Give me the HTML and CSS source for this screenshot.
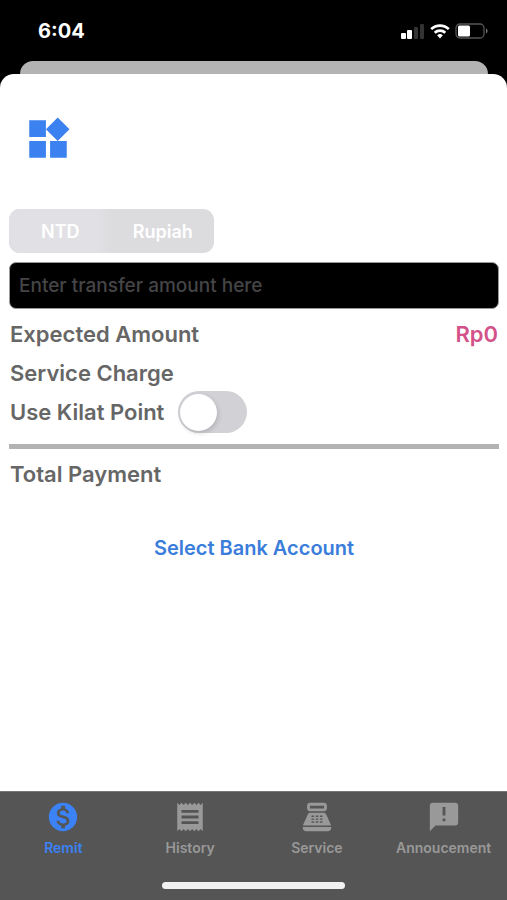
FILE: index.html
```html
<!DOCTYPE html>
<html lang="en">
<head>
<meta charset="utf-8">
<meta name="viewport" content="width=device-width, initial-scale=1">
<title>Remit</title>
<link rel="stylesheet" href="styles.css">
</head>
<body>
<header class="status">
  <span class="time">6:04</span>
  <div class="status-icons">
    <svg width="24" height="16" viewBox="0 0 24 16" aria-hidden="true">
      <g fill="#fff"><rect x="0" y="10" width="5" height="6" rx="1"/><rect x="6" y="7" width="5" height="9" rx="1"/></g>
      <g fill="#333"><rect x="13" y="4" width="4" height="12" rx="1"/><rect x="19" y="1" width="4" height="15" rx="1"/></g>
    </svg>
    <svg width="20" height="16" viewBox="0 0 20 16" aria-hidden="true">
      <g fill="none" stroke="#fff" stroke-width="2.7"><path d="M1.2 6.1a12.7 12.7 0 0 1 17.6 0"/><path d="M4.7 9.8a7.7 7.7 0 0 1 10.6 0"/></g>
      <path fill="#fff" d="M7.1 12.3a4.4 4.4 0 0 1 5.8 0L10 15.4z"/>
    </svg>
    <svg width="34" height="16" viewBox="0 0 34 16" aria-hidden="true">
      <rect x="1" y="1" width="28" height="14" rx="4" fill="none" stroke="#555" stroke-width="1.3"/>
      <rect x="3" y="2.500" width="12" height="11" rx="1.500" fill="#fff"/>
      <path d="M31 5.500c2 .8 2 4.200 0 5z" fill="#777"/>
    </svg>
  </div>
</header>
<div class="back-card"></div>
<main class="sheet">
  <button class="menu" type="button" aria-label="Menu">
    <svg width="50" height="50" viewBox="0 0 24 24" fill="currentColor" aria-hidden="true"><path d="M13 13v8h8v-8h-8zM3 21h8v-8H3v8zM3 3v8h8V3H3zm13.660-1.310L11 7.340 16.660 13l5.660-5.660-5.660-5.650z"/></svg>
  </button>
  <form class="form">
    <div class="segments" role="radiogroup" aria-label="Currency">
      <label class="segment"><input type="radio" name="currency" checked><span>NTD</span></label>
      <label class="segment"><input type="radio" name="currency"><span>Rupiah</span></label>
    </div>
    <input class="amount" type="text" inputmode="decimal" aria-label="Transfer amount" placeholder="Enter transfer amount here">
    <div class="row"><span>Expected Amount</span><span class="value">Rp0</span></div>
    <div class="row"><span>Service Charge</span></div>
    <div class="row row-point">
      <label for="point">Use Kilat Point</label>
      <input class="switch" id="point" type="checkbox" role="switch">
    </div>
    <hr class="rule">
    <div class="row"><span>Total Payment</span></div>
    <button class="bank" type="button">Select Bank Account</button>
  </form>
</main>
<nav class="tabbar">
  <div class="tabs">
    <a class="tab active" href="#remit" aria-current="page">
      <svg class="icon" viewBox="0 0 24 24" aria-hidden="true"><path d="M12 2C6.480 2 2 6.480 2 12s4.480 10 10 10 10-4.480 10-10S17.520 2 12 2zm1.410 16.090V20h-2.670v-1.930c-1.710-.36-3.160-1.460-3.270-3.400h1.960c.1 1.050.82 1.870 2.650 1.870 1.960 0 2.400-.98 2.400-1.590 0-.83-.44-1.610-2.670-2.140-2.480-.6-4.180-1.620-4.180-3.670 0-1.720 1.390-2.840 3.110-3.210V4h2.670v1.950c1.860.45 2.790 1.860 2.850 3.390H14.300c-.05-1.110-.64-1.870-2.220-1.870-1.500 0-2.400.68-2.400 1.640 0 .84.65 1.390 2.670 1.910s4.180 1.390 4.180 3.910c-.01 1.830-1.380 2.830-3.120 3.160z"/></svg>
      <span>Remit</span>
    </a>
    <a class="tab" href="#history">
      <svg class="icon" viewBox="0 0 24 24" aria-hidden="true"><path d="M18 17H6v-2h12v2zm0-4H6v-2h12v2zm0-4H6V7h12v2zM3 22l1.500-1.500L6 22l1.500-1.500L9 22l1.500-1.500L12 22l1.500-1.500L15 22l1.500-1.500L18 22l1.500-1.500L21 22V2l-1.500 1.500L18 2l-1.500 1.500L15 2l-1.500 1.500L12 2l-1.500 1.500L9 2 7.500 3.500 6 2 4.500 3.500 3 2v20z"/></svg>
      <span>History</span>
    </a>
    <a class="tab" href="#service">
      <svg class="icon" viewBox="0 0 24 24" aria-hidden="true">
        <path d="M17 2H7c-1.100 0-2 .9-2 2v2c0 1.100.9 2 2 2h10c1.100 0 2-.9 2-2V4c0-1.100-.9-2-2-2zm0 4H7V4h10v2zM20 22H4c-1.100 0-2-.9-2-2v-1h20v1c0 1.100-.9 2-2 2zM18.530 10.190C18.210 9.470 17.490 9 16.700 9H7.300c-.79 0-1.510.47-1.830 1.190L2 18h20z"/>
        <g class="keys"><rect x="8" y="11" width="2" height="1" rx=".5"/><rect x="11" y="11" width="2" height="1" rx=".5"/><rect x="14" y="11" width="2" height="1" rx=".5"/><rect x="8" y="13" width="2" height="1" rx=".5"/><rect x="11" y="13" width="2" height="1" rx=".5"/><rect x="14" y="13" width="2" height="1" rx=".5"/><rect x="8" y="15" width="2" height="1" rx=".5"/><rect x="11" y="15" width="2" height="1" rx=".5"/><rect x="14" y="15" width="2" height="1" rx=".5"/></g>
      </svg>
      <span>Service</span>
    </a>
    <a class="tab" href="#announcement">
      <svg class="icon" viewBox="0 0 24 24" aria-hidden="true"><path d="M20 2H4c-1.100 0-1.990.9-1.990 2L2 22l4-4h14c1.100 0 2-.9 2-2V4c0-1.100-.9-2-2-2zm-7 9h-2V5h2v6zm0 4h-2v-2h2v2z"/></svg>
      <span>Annoucement</span>
    </a>
  </div>
  <div class="home-indicator"></div>
</nav>
</body>
</html>
```
FILE: styles.css
```css
* {
  box-sizing: border-box;
}

body {
  margin: 0;
  min-height: 100vh;
  display: flex;
  flex-direction: column;
  background: #000;
  color: #666;
  font-family: Inter, "Liberation Sans", sans-serif;
}

button,
input {
  margin: 0;
  font-family: inherit;
}

.status {
  display: flex;
  justify-content: space-between;
  align-items: center;
  height: 61px;
  padding: 0 18px 0 38px;
  color: #fff;
}

.time {
  font-size: 20px;
  font-weight: 700;
}

.status-icons {
  display: flex;
  gap: 5px;
}

.back-card {
  height: 13px;
  margin: 0 19px 0 20px;
  border-radius: 13px 13px 0 0;
  background: #b3b3b4;
}

.sheet {
  flex: 1;
  padding: 40px 8px 24px 9px;
  border-radius: 14px 14px 0 0;
  background: #fff;
}

.menu {
  display: block;
  margin-left: 14px;
  padding: 0;
  border: 0;
  background: none;
  color: #3b82f0;
}

.menu svg {
  display: block;
}

.form {
  display: flex;
  flex-direction: column;
  margin-top: 45px;
}

.segments {
  display: grid;
  grid-template-columns: 1fr 1fr;
  width: 205px;
  height: 44px;
  border-radius: 11px;
  overflow: hidden;
  background: #dcdcdf;
}

.segment {
  display: grid;
  cursor: pointer;
}

.segment input {
  grid-area: 1 / 1;
  appearance: none;
}

.segment input:checked {
  background: linear-gradient(to right, #e1e1e5 85%, #dcdcdf);
}

.segment span {
  grid-area: 1 / 1;
  place-self: center;
  color: #fff;
  font-size: 18px;
  font-weight: 600;
}

.amount {
  width: 100%;
  height: 47px;
  margin: 9px 0 5px;
  padding: 0 9px;
  border: 1px solid #999;
  border-radius: 7px;
  background: #000;
  color: #fff;
  font-size: 19px;
  font-weight: 500;
}

.amount::placeholder {
  color: #454547;
  opacity: 1;
}

.row {
  display: flex;
  justify-content: space-between;
  align-items: center;
  height: 39px;
  padding: 0 1px;
  font-size: 22px;
  font-weight: 600;
}

.row-point {
  justify-content: flex-start;
  gap: 14px;
}

.value {
  color: #d4528a;
}

.switch {
  display: flex;
  flex: none;
  width: 69px;
  height: 42px;
  padding: 3px 2px;
  appearance: none;
  border-radius: 21px;
  background: #d1d1d6;
  cursor: pointer;
}

.switch::before {
  content: "";
  width: 37px;
  height: 37px;
  border-radius: 50%;
  background: #fff;
  box-shadow: 1px 2px 5px rgba(0, 0, 0, 0.16);
}

.switch:checked {
  justify-content: flex-end;
  background: #3b82f0;
}

.rule {
  width: 100%;
  height: 5px;
  margin: 13px 0 5px;
  border: 0;
  background: #b3b3b3;
}

.bank {
  align-self: center;
  margin-top: 41px;
  padding: 0;
  border: 0;
  background: none;
  color: #3b7ddb;
  font-size: 20px;
  font-weight: 600;
  line-height: 28px;
}

.tabbar {
  height: 109px;
  padding-top: 8px;
  border-top: 1px solid #777;
  background: #555;
}

.tabs {
  display: grid;
  grid-template-columns: repeat(4, 1fr);
}

.tab {
  display: flex;
  flex-direction: column;
  align-items: center;
  gap: 4px;
  color: #999;
  font-size: 14px;
  font-weight: 600;
  line-height: 20px;
  text-decoration: none;
}

.tab.active {
  color: #3b82f6;
}

.icon {
  width: 34px;
  height: 34px;
  fill: currentColor;
}

.keys {
  fill: #555;
}

.home-indicator {
  width: 36%;
  height: 7px;
  margin: 24px auto 0;
  border-radius: 4px;
  background: #f2f2f2;
}
```
